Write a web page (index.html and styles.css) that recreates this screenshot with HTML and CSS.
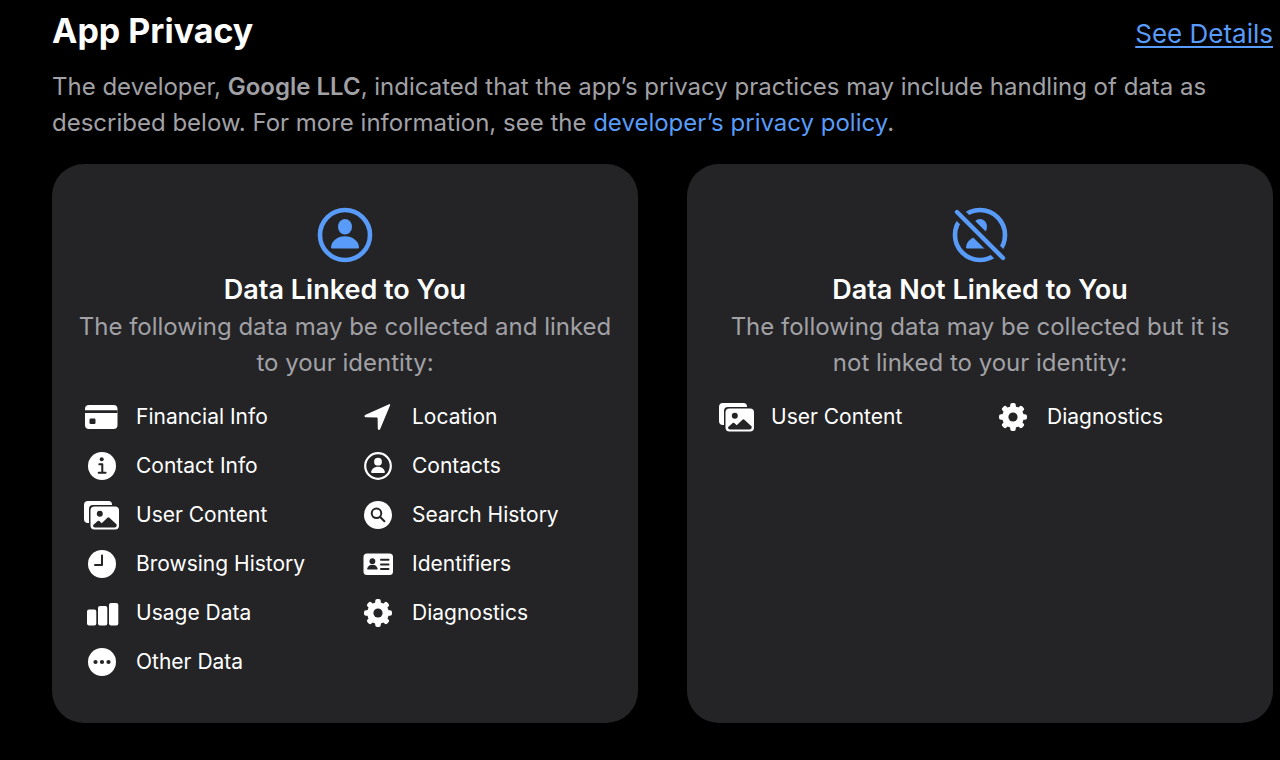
FILE: index.html
```html
<!DOCTYPE html>
<html lang="en">
<head>
    <meta charset="UTF-8">
    <meta name="viewport" content="width=device-width, initial-scale=1.0">
    <title>App Privacy</title>
    <link rel="stylesheet" href="styles.css">
</head>
<body>
    <!-- Icons used more than once -->
    <svg class="sprite" aria-hidden="true">
        <symbol id="icon-photos" viewBox="0 0 36 36">
            <path d="M4 4h20.500a3.500 3.500 0 0 1 3.500 3.500v.5H9a4 4 0 0 0-4 4v14H4a4 4 0 0 1-4-4V8a4 4 0 0 1 4-4z"/>
            <rect x="6.500" y="9.500" width="28.500" height="23" rx="4"/>
            <circle class="cut" cx="15.800" cy="16.700" r="3"/>
            <path class="cut" d="M9 28.200l4.700-4.200q.8-.7 1.600 0l2.400 2.200 5.700-5.400q1-.9 2 0l7.300 6.800v.6a2.200 2.200 0 0 1-2.200 2.200H11a2 2 0 0 1-2-2z"/>
        </symbol>
        <symbol id="icon-gear" viewBox="0 0 36 36">
            <circle cx="18" cy="18" r="10.800"/>
            <rect id="tooth" x="15.200" y="4" width="5.600" height="28" rx="2"/>
            <use href="#tooth" transform="rotate(45 18 18)"/>
            <use href="#tooth" transform="rotate(90 18 18)"/>
            <use href="#tooth" transform="rotate(135 18 18)"/>
            <circle class="cut" cx="18" cy="18" r="4.600"/>
        </symbol>
    </svg>

    <main class="privacy">
        <header class="privacy-header">
            <h1>App Privacy</h1>
            <a href="#details" class="see-details">See Details</a>
        </header>

        <p class="intro">The developer, <strong>Google LLC</strong>, indicated that the app’s privacy practices may include handling of data as described below. For more information, see the <a href="#policy">developer’s privacy policy</a>.</p>

        <div class="cards" id="details">
            <!-- Data Linked to You -->
            <section class="card">
                <svg class="card-icon" viewBox="0 0 56 56" aria-hidden="true">
                    <circle class="ring" cx="28" cy="28" r="25"/>
                    <ellipse cx="28" cy="19.700" rx="7" ry="7.700"/>
                    <path d="M15.200 41.600q-1.200 0-1.200-1.300C14.400 34 20.500 29.300 28 29.300S41.600 34 42 40.300q0 1.300-1.200 1.300z"/>
                </svg>
                <h2>Data Linked to You</h2>
                <p>The following data may be collected and linked to your identity:</p>
                <ul class="data-list">
                    <li>
                        <svg class="icon" viewBox="0 0 36 36" aria-hidden="true">
                            <rect x="1" y="6" width="32.500" height="24" rx="4"/>
                            <path class="cut" d="M1 11.300h32.500v2.700H1z"/>
                            <rect class="cut" x="5.500" y="19.500" width="6" height="5.500" rx="1.200"/>
                        </svg>
                        Financial Info
                    </li>
                    <li>
                        <svg class="icon" viewBox="0 0 36 36" aria-hidden="true">
                            <path d="M29.100 5.300q1.600-.6 1 1L20.300 29.700c-.7 1.700-2.500 1.500-2.500-.2L17.600 19.100q0-.7-.7-.7L6 18.300c-1.800 0-2.100-1.800-.4-2.600z"/>
                        </svg>
                        Location
                    </li>
                    <li>
                        <svg class="icon" viewBox="0 0 36 36" aria-hidden="true">
                            <circle cx="18" cy="18" r="14"/>
                            <circle class="cut" cx="17.700" cy="11.300" r="2"/>
                            <path class="cut-line" d="M15.300 16.200h3v8.200M14.700 24.700h6.900"/>
                        </svg>
                        Contact Info
                    </li>
                    <li>
                        <svg class="icon" viewBox="0 0 36 36" aria-hidden="true">
                            <circle class="thin-ring" cx="18" cy="18" r="12.800"/>
                            <circle cx="18" cy="13.700" r="3.900"/>
                            <path d="M12 25q-.9 0-.9-.9c.5-3.300 3.400-5.400 6.900-5.400s6.400 2.100 6.900 5.400q0 .9-.9.9z"/>
                        </svg>
                        Contacts
                    </li>
                    <li>
                        <svg class="icon" aria-hidden="true"><use href="#icon-photos"/></svg>
                        User Content
                    </li>
                    <li>
                        <svg class="icon" viewBox="0 0 36 36" aria-hidden="true">
                            <circle cx="18" cy="18" r="14"/>
                            <circle class="cut-line" cx="16.500" cy="16.300" r="4.800"/>
                            <path class="cut-line" d="M20.200 20l4.200 4.300"/>
                        </svg>
                        Search History
                    </li>
                    <li>
                        <svg class="icon" viewBox="0 0 36 36" aria-hidden="true">
                            <circle cx="18" cy="18" r="14"/>
                            <path class="cut-line" d="M18 9.500v9.500h-7"/>
                        </svg>
                        Browsing History
                    </li>
                    <li>
                        <svg class="icon" viewBox="0 0 36 36" aria-hidden="true">
                            <rect x="3.500" y="7.500" width="29.500" height="21.500" rx="3.500"/>
                            <circle class="cut" cx="12.400" cy="15.200" r="2.900"/>
                            <path class="cut" d="M7.800 23.600q-.8 0-.7-.8c.5-2.500 2.600-4.100 5.300-4.100s4.800 1.600 5.300 4.100q0 .8-.7.8z"/>
                            <path class="cut-line" d="M21 13.800h7.500M21 18.400h7.500M21 23h7.500"/>
                        </svg>
                        Identifiers
                    </li>
                    <li>
                        <svg class="icon" viewBox="0 0 36 36" aria-hidden="true">
                            <rect x="3" y="14.500" width="9.300" height="16" rx="2"/>
                            <rect x="14" y="11" width="9.300" height="19.500" rx="2"/>
                            <rect x="25" y="8" width="9.300" height="22.500" rx="2"/>
                        </svg>
                        Usage Data
                    </li>
                    <li>
                        <svg class="icon" aria-hidden="true"><use href="#icon-gear"/></svg>
                        Diagnostics
                    </li>
                    <li>
                        <svg class="icon" viewBox="0 0 36 36" aria-hidden="true">
                            <circle cx="18" cy="18" r="14"/>
                            <circle class="cut" cx="11.500" cy="18" r="2.100"/>
                            <circle class="cut" cx="18" cy="18" r="2.100"/>
                            <circle class="cut" cx="24.500" cy="18" r="2.100"/>
                        </svg>
                        Other Data
                    </li>
                </ul>
            </section>

            <!-- Data Not Linked to You -->
            <section class="card">
                <svg class="card-icon" viewBox="0 0 56 56" aria-hidden="true">
                    <circle class="ring" cx="28" cy="28" r="25"/>
                    <ellipse cx="28" cy="19.700" rx="7" ry="7.700"/>
                    <path d="M15.200 41.600q-1.200 0-1.200-1.300C14.400 34 20.500 29.300 28 29.300S41.600 34 42 40.300q0 1.300-1.200 1.300z"/>
                    <path class="slash-gap" d="M0 0l56 56"/>
                    <path class="slash" d="M5 5l46 46"/>
                </svg>
                <h2>Data Not Linked to You</h2>
                <p>The following data may be collected but it is not linked to your identity:</p>
                <ul class="data-list">
                    <li>
                        <svg class="icon" aria-hidden="true"><use href="#icon-photos"/></svg>
                        User Content
                    </li>
                    <li>
                        <svg class="icon" aria-hidden="true"><use href="#icon-gear"/></svg>
                        Diagnostics
                    </li>
                </ul>
            </section>
        </div>
    </main>
</body>
</html>
```
FILE: styles.css
```css
/* General Styling */
body {
    font-family: Inter, "Liberation Sans", sans-serif;
    margin: 0;
    background-color: #000;
    color: #fff;
}

h1, h2, p, ul {
    margin: 0;
    padding: 0;
}

a {
    color: #589bf8;
    text-decoration: none;
}

.sprite {
    position: absolute;
    width: 0;
    height: 0;
}

.privacy {
    padding: 10px 7px 36px 52px;
}

/* Header */
.privacy-header {
    display: flex;
    align-items: baseline;
    justify-content: space-between;
    margin-bottom: 17px;
}

h1 {
    font-size: 34px;
    line-height: 42px;
    font-weight: 700;
}

.see-details {
    font-size: 26px;
    line-height: 32px;
    text-decoration: underline;
    text-decoration-thickness: 2px;
    text-underline-offset: 3px;
}

.intro {
    font-size: 24px;
    line-height: 36px;
    color: #a1a1a6;
    margin-bottom: 23px;
}

.intro strong {
    font-weight: 600;
}

/* Cards */
.cards {
    display: grid;
    grid-template-columns: 1fr 1fr;
    gap: 49px;
}

.card {
    background: #242426;
    border-radius: 32px;
    padding: 43px 24px;
    text-align: center;
}

.card-icon {
    display: block;
    width: 56px;
    height: 56px;
    margin: 0 auto 9px;
    fill: #589bf8;
}

.ring {
    fill: none;
    stroke: #589bf8;
    stroke-width: 4.6;
}

.slash,
.slash-gap {
    stroke: #589bf8;
    stroke-width: 4.4;
    stroke-linecap: round;
}

.slash-gap {
    stroke: #242426;
    stroke-width: 13;
}

.card h2 {
    font-size: 27px;
    line-height: 36px;
    font-weight: 600;
    margin-bottom: 1px;
}

.card p {
    font-size: 24px;
    line-height: 36px;
    color: #a1a1a6;
    margin-bottom: 18px;
}

/* Data type list */
.data-list {
    list-style: none;
    display: grid;
    grid-template-columns: 1fr 1fr;
    gap: 13px 30px;
    padding: 0 8px;
    text-align: left;
}

.data-list li {
    display: flex;
    align-items: center;
    gap: 16px;
    font-size: 21px;
    line-height: 36px;
    white-space: nowrap;
}

.icon {
    width: 36px;
    height: 36px;
    flex-shrink: 0;
    fill: #fff;
}

.thin-ring {
    fill: none;
    stroke: #fff;
    stroke-width: 2.2;
}

/* Parts knocked out of an icon */
.cut {
    fill: #242426;
}

.cut-line {
    fill: none;
    stroke: #242426;
    stroke-width: 2;
    stroke-linecap: round;
    stroke-linejoin: round;
}
```
